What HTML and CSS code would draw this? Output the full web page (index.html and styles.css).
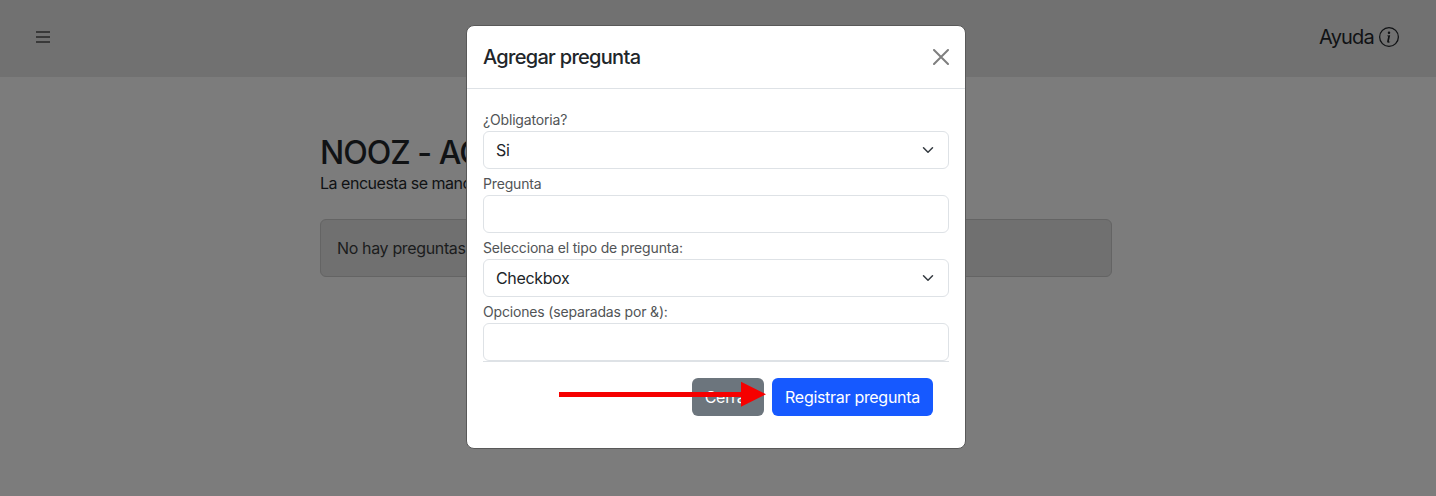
FILE: index.html
```html
<!DOCTYPE html>
<html lang="es">
<head>
<meta charset="utf-8">
<title>NOOZ</title>
<link rel="stylesheet" href="styles.css">
</head>
<body>
<header class="topbar">
  <svg class="menu-icon" width="14" height="12" viewBox="0 0 14 12"><path d="M0 1h14M0 6h14M0 11h14" stroke="#393939" stroke-width="2"/></svg>
  <div class="help"><span class="help-text">Ayuda</span>
    <svg width="20" height="20" viewBox="0 0 16 16" fill="currentColor"><path d="M8 15A7 7 0 1 1 8 1a7 7 0 0 1 0 14m0 1A8 8 0 1 0 8 0a8 8 0 0 0 0 16"/><path d="m8.930 6.588-2.290.287-.082.380.450.083c.294.070.352.176.288.469l-.738 3.468c-.194.897.105 1.319.808 1.319.545 0 1.178-.252 1.465-.598l.088-.416c-.200.176-.492.246-.686.246-.275 0-.375-.193-.304-.533zM9 4.500a1 1 0 1 1-2 0 1 1 0 0 1 2 0"/></svg>
  </div>
</header>
<main class="page">
  <h1 class="title">NOOZ - AG</h1>
  <p class="subtitle">La encuesta se mand</p>
  <div class="alert">No hay preguntas</div>
</main>
<section class="modal">
  <div class="modal-header">
    <h2 class="modal-title">Agregar pregunta</h2>
    <svg width="16" height="16" viewBox="0 0 16 16"><path d="M1 1l14 14M15 1L1 15" stroke="#7f7f7f" stroke-width="2" stroke-linecap="round"/></svg>
  </div>
  <div class="modal-body">
    <div class="label">¿Obligatoria?</div>
    <div class="control"><span>Si</span><svg width="16" height="12" viewBox="0 0 16 16"><path d="m2 5 6 6 6-6" fill="none" stroke="#343a40" stroke-width="2" stroke-linecap="round" stroke-linejoin="round"/></svg></div>
    <div class="label">Pregunta</div>
    <div class="control"></div>
    <div class="label">Selecciona el tipo de pregunta:</div>
    <div class="control"><span>Checkbox</span><svg width="16" height="12" viewBox="0 0 16 16"><path d="m2 5 6 6 6-6" fill="none" stroke="#343a40" stroke-width="2" stroke-linecap="round" stroke-linejoin="round"/></svg></div>
    <div class="label">Opciones (separadas por &amp;):</div>
    <div class="control"></div>
    <div class="modal-footer">
      <div class="btn btn-close">Cerrar</div>
      <div class="btn btn-save">Registrar pregunta</div>
    </div>
  </div>
</section>
<svg class="arrow" width="208" height="26" viewBox="0 0 208 26"><path d="M0 11h182V.8l25 12.500L182 25.800V16H0z" fill="#f60000"/></svg>
</body>
</html>
```
FILE: styles.css
```css
* { box-sizing: border-box; }
body {
  margin: 0;
  height: 496px;
  overflow: hidden;
  background: #7c7c7c;
  color: #101214;
  font: 16px/24px Inter, "Liberation Sans", sans-serif;
  letter-spacing: -0.35px;
}
h1, h2, p { margin: 0; }
svg { display: block; flex: none; }
.topbar {
  display: flex;
  justify-content: space-between;
  align-items: center;
  height: 77px;
  padding: 0 37px 3px 36px;
  background: #717171;
}
.help { display: flex; align-items: center; gap: 5px; font-size: 20px; letter-spacing: -0.8px; }
.page { width: 792px; margin: 58px 0 0 320px; white-space: nowrap; }
.title { font-size: 32px; line-height: 36px; font-weight: 500; letter-spacing: -1px; }
.subtitle { letter-spacing: -0.48px; }
.alert {
  height: 58px;
  margin-top: 24px;
  padding: 16px;
  border: 1px solid #646464;
  border-radius: 6px;
  background: #707070;
  color: #1b1c1d;
}
.modal {
  position: absolute;
  left: 466px;
  top: 25px;
  width: 500px;
  height: 424px;
  border: 1px solid #595959;
  border-radius: 8px;
  background: #fff;
  color: #212529;
}
.modal-header {
  display: flex;
  justify-content: space-between;
  align-items: center;
  height: 63px;
  padding: 0 16px;
  border-bottom: 1px solid #dee2e6;
}
.modal-title { font-size: 20px; font-weight: 550; letter-spacing: -0.7px; }
.modal-body { padding: 16px; }
.label { height: 26px; padding-top: 3px; font-size: 14px; color: #515456; letter-spacing: -0.17px; }
.control {
  display: flex;
  justify-content: space-between;
  align-items: center;
  height: 38px;
  padding: 0 12px;
  border: 1px solid #dee2e6;
  border-radius: 6px;
}
.modal-footer {
  display: flex;
  justify-content: flex-end;
  gap: 8px;
  padding: 16px;
  border-top: 1px solid #dee2e6;
}
.btn {
  height: 38px;
  padding: 7px 0;
  border-radius: 6px;
  color: #fff;
  text-align: center;
  letter-spacing: -0.3px;
}
.btn-close { width: 72px; background: #6c757d; }
.btn-save { width: 161px; background: #1659ff; }
.arrow { position: absolute; left: 559px; top: 381px; }
```
